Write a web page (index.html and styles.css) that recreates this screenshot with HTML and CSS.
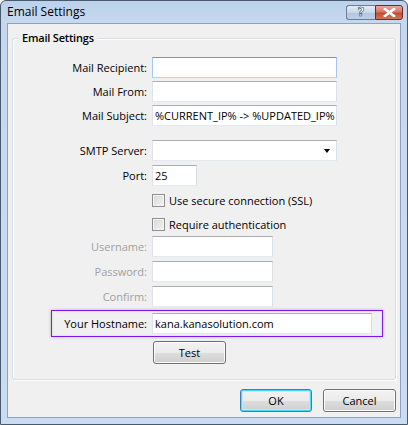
FILE: index.html
```html
<!DOCTYPE html>
<html>
<head>
<meta charset="utf-8">
<link rel="stylesheet" href="styles.css">
</head>
<body>
<div class="window">
  <div class="titlebar">
    <span class="title">Email Settings</span>
    <div class="tbtns">
      <span class="tbtn help">?</span>
      <span class="tbtn close">
        <svg width="13" height="9" viewBox="0 0 13 9"><path d="M2 1 L11 8 M11 1 L2 8" stroke="#fff" stroke-width="2.6" stroke-linecap="square" fill="none"/></svg>
      </span>
    </div>
  </div>
  <div class="client">
    <div class="group">
      <span class="legend">Email Settings</span>
      <div class="row r-recip"><label class="lbl">Mail Recipient:</label><div class="input wide focus"></div></div>
      <div class="row r-from"><label class="lbl">Mail From:</label><div class="input wide"></div></div>
      <div class="row r-subj"><label class="lbl">Mail Subject:</label><div class="input wide">%CURRENT_IP% -&gt; %UPDATED_IP%</div></div>
      <div class="row r-smtp"><label class="lbl">SMTP Server:</label><div class="input wide combo"><span class="arrow"></span></div></div>
      <div class="row r-port"><label class="lbl">Port:</label><div class="input port">25</div></div>
      <div class="row r-cb1"><span class="lbl"></span><span class="cb"></span><span class="cbtext">Use secure connection (SSL)</span></div>
      <div class="row r-cb2"><span class="lbl"></span><span class="cb"></span><span class="cbtext">Require authentication</span></div>
      <div class="row r-user"><label class="lbl dis">Username:</label><div class="input mid"></div></div>
      <div class="row r-pass"><label class="lbl dis">Password:</label><div class="input mid"></div></div>
      <div class="row r-conf"><label class="lbl dis">Confirm:</label><div class="input mid"></div></div>
      <div class="hostbox"><label class="hlbl">Your Hostname:</label><div class="input host">kana.kanasolution.com</div></div>
      <div class="row r-test"><span class="lbl"></span><span class="btn test">Test</span></div>
    </div>
    <div class="buttons">
      <span class="btn ok">OK</span>
      <span class="btn cancel">Cancel</span>
    </div>
  </div>
</div>
</body>
</html>
```
FILE: styles.css
```css
html, body {
  margin: 0;
  padding: 0;
  background: #fff;
}
body {
  font-family: "Open Sans", "Noto Sans", sans-serif;
  font-size: 11px;
  color: #000;
}
.window {
  width: 408px;
  height: 425px;
  box-sizing: border-box;
  border: 1px solid #4a5a6e;
  border-radius: 6px 6px 0 0;
  background: linear-gradient(#bcd2ec 0px, #c6d8ee 22px, #cadcf1 100%);
  display: flex;
  flex-direction: column;
  padding: 0 6px 6px 6px;
}
.titlebar {
  height: 22px;
  display: flex;
  align-items: center;
  justify-content: space-between;
}
.title {
  font-size: 12px;
  margin-top: -1px;
  color: #000;
}
.tbtns {
  display: flex;
  align-self: flex-start;
  margin-top: 4px;
  margin-right: -2px;
}
.tbtn {
  height: 15px;
  box-sizing: border-box;
  display: flex;
  align-items: center;
  justify-content: center;
  border: 1px solid #6c7c92;
}
.help {
  width: 29px;
  border-radius: 3px 0 0 3px;
  border-right: none;
  background: linear-gradient(#e4ecf6 0%, #c9d7e8 50%, #b3c6dd 51%, #bccfe6 100%);
  color: #fff;
  font-family: "DejaVu Sans", sans-serif;
  font-weight: bold;
  font-size: 12px;
  -webkit-text-stroke: 0.6px #3e4e66;
  line-height: 13px;
}
.close {
  width: 28px;
  border-radius: 0 3px 3px 0;
  border-color: #6a2b24;
  background: linear-gradient(#e9a99c 0%, #d47766 45%, #c24a33 55%, #d5745c 100%);
}
.client {
  flex: 1;
  background: #f0f0f0;
  border: 1px solid #8ea3bd;
  display: flex;
  flex-direction: column;
  padding: 14px 4px 0 4px;
}
.group {
  position: relative;
  height: 342px;
  box-sizing: border-box;
  border: 1px solid #d5dfe5;
  border-radius: 3px;
  box-shadow: inset 1px 1px 0 #fff, 1px 1px 0 #fff;
  display: flex;
  flex-direction: column;
  padding-top: 18px;
}
.legend {
  position: absolute;
  left: 6px;
  top: -9px;
  padding: 0 3px;
  background: #f0f0f0;
  font-size: 11px;
  font-weight: 600;
  letter-spacing: -0.2px;
  line-height: 16px;
}
.row {
  display: flex;
  align-items: center;
  height: 21px;
}
.lbl {
  width: 134px;
  flex: none;
  text-align: right;
  margin-right: 5px;
}
.lbl.dis { color: #a0a0a0; }
.r-from, .r-subj { margin-top: 3px; }
.r-smtp { margin-top: 14px; }
.r-port { margin-top: 4px; }
.r-cb1 { margin-top: 4px; }
.r-cb2 { margin-top: 3px; }
.r-user { margin-top: 1px; }
.r-pass, .r-conf { margin-top: 4px; }
.r-test { margin-top: 4px; height: 23px; }

.input {
  height: 21px;
  box-sizing: border-box;
  background: #fff;
  border: 1px solid;
  border-color: #abadb3 #dbdfe6 #e3e9ef #e2e3ea;
  padding: 0 2px;
  display: flex;
  align-items: center;
  white-space: nowrap;
  overflow: hidden;
}
.input.focus { border-color: #5b9bd5 #a5c8ea #b9d6f1 #a5c8ea; }
.wide { width: 185px; }
.port { width: 45px; }
.mid { width: 121px; }
.combo {
  justify-content: flex-end;
  padding-right: 6px;
}
.arrow {
  width: 0;
  height: 0;
  border-left: 3.5px solid transparent;
  border-right: 3.5px solid transparent;
  border-top: 4px solid #000;
}
.cb {
  width: 13px;
  height: 13px;
  box-sizing: border-box;
  border: 1px solid #8e8f8f;
  background: linear-gradient(135deg, #d8d8d8, #f4f4f4);
  box-shadow: inset 0 0 0 1px #f4f4f4;
  flex: none;
}
.cbtext {
  margin-left: 4px;
}
.hostbox {
  margin-top: 3px;
  margin-left: 38px;
  width: 332px;
  height: 27px;
  box-sizing: border-box;
  border: 1px solid #7a1ae8;
  box-shadow: 0 0 3px rgba(0,0,0,0.25), inset 0 0 2px rgba(0,0,0,0.15);
  display: flex;
  align-items: center;
}
.hlbl {
  width: 95px;
  flex: none;
  text-align: right;
  margin-right: 5px;
}
.host { width: 220px; }
.btn {
  height: 23px;
  box-sizing: border-box;
  width: 73px;
  border: 1px solid #707070;
  border-radius: 3px;
  background: linear-gradient(#f2f2f2 0%, #ebebeb 50%, #dddddd 51%, #cfcfcf 100%);
  box-shadow: inset 0 0 0 1px #fcfcfc;
  display: flex;
  align-items: center;
  justify-content: center;
}
.test { margin-left: 1px; }
.buttons {
  display: flex;
  justify-content: flex-end;
  gap: 11px;
  margin-top: 9px;
}
.ok {
  border-color: #3c7fb1;
  box-shadow: inset 0 0 0 1px #48d8fb, inset 0 0 0 2px #c4e6f6;
  width: 72px;
}
```
